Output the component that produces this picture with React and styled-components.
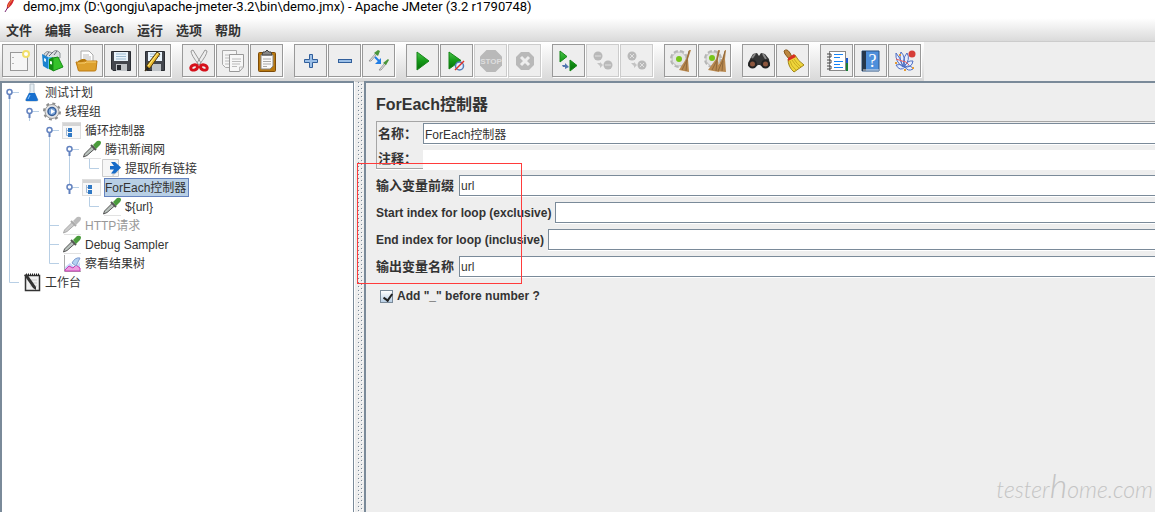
import { useState } from "react";
import styled, { createGlobalStyle } from "styled-components";

const GlobalStyle = createGlobalStyle`
  html, body, #root {
    height: 100%;
    margin: 0;
  }
  body {
    overflow: hidden;
    background: #eeeeee;
    color: #333333;
    font-family: "Liberation Sans", "Noto Sans CJK SC", sans-serif;
    font-size: 12px;
  }
  * {
    box-sizing: border-box;
  }
`;

const Window = styled.div`
  display: flex;
  flex-direction: column;
  height: 100%;
`;

const TitleBar = styled.header`
  display: flex;
  align-items: flex-start;
  gap: 8px;
  height: 18px;
  padding-left: 3px;
  background: #ffffff;
  color: #000000;
  font: 13px/14px Roboto, "Open Sans", sans-serif;
  white-space: nowrap;
`;

const MenuBar = styled.nav`
  display: flex;
  align-items: center;
  gap: 13px;
  height: 24px;
  padding: 0 6px 1px;
  background: linear-gradient(#ffffff, #dadada);
  border-bottom: 1px solid #cccccc;
`;

const MenuButton = styled.button`
  padding: 0;
  border: 0;
  background: none;
  color: #333333;
  font: bold ${(props) => (props.$latin ? 12 : 13)}px "Liberation Sans",
    "Noto Sans CJK SC", sans-serif;
`;

const ToolBar = styled.div`
  display: flex;
  align-items: center;
  align-self: flex-start;
  gap: 10px;
  height: 39px;
  padding: 0 2px 1px;
  background: linear-gradient(#ffffff, #d8d8d8);
`;

const ToolGroup = styled.div`
  display: flex;
`;

const ToolButton = styled.button`
  display: flex;
  align-items: center;
  justify-content: center;
  width: 33px;
  height: 33px;
  margin: 0 1px 1px 0;
  padding: 0;
  border: 1px solid ${(props) => (props.disabled ? "#cccccc" : "#999999")};
  box-shadow: 1px 1px 0 #ffffff;
  background: #eeeeee;
`;

const Workspace = styled.main`
  display: flex;
  flex: 1;
  min-height: 0;
`;

const TreePanel = styled.section`
  flex: 0 0 354px;
  border: solid #7a8a99;
  border-width: 2px 1px 0 2px;
  background: #ffffff;
`;

const TreeList = styled.ul`
  margin: 0;
  padding: 0;
  list-style: none;
`;

const TreeRow = styled.li`
  display: flex;
  align-items: center;
  height: 19px;
  color: ${(props) => (props.$disabled ? "#999999" : "#333333")};
  svg {
    flex: none;
  }
`;

const NodeLabel = styled.span`
  height: 19px;
  margin-left: 2px;
  padding-right: 2px;
  border: 1px solid ${(props) => (props.$selected ? "#6382bf" : "transparent")};
  background: ${(props) => (props.$selected ? "#b8cfe5" : "transparent")};
  line-height: 18px;
  white-space: nowrap;
`;

const Divider = styled.div`
  flex: 0 0 10px;
  border-top: 1px solid #cccccc;
  border-left: 1px solid #ffffff;
  background: #eeeeee;
`;

const Dots = styled.svg`
  display: block;
  width: 8px;
  height: 100%;
`;

const EditorPanel = styled.section`
  position: relative;
  flex: 1;
  min-width: 0;
  padding: 10px 0 0 10px;
  border: solid #7a8a99;
  border-width: 2px 0 0 2px;
  background: #eeeeee;
`;

const Heading = styled.h1`
  height: 28px;
  margin: 0;
  font-size: 16px;
  line-height: 24px;
`;

const NameBox = styled.div`
  display: flex;
  flex-direction: column;
  gap: 6px;
  margin-bottom: 6px;
  padding: 1px 0 0 1px;
  border: solid #a5a5a5;
  border-width: 1px 0 1px 1px;
  box-shadow: 0 1px 0 #ffffff;
`;

const Fields = styled.div`
  display: flex;
  flex-direction: column;
  gap: 6px;
`;

const FieldRow = styled.div`
  display: flex;
  align-items: center;
  gap: ${(props) => (props.$latin ? 4 : 5)}px;
`;

const Label = styled.label`
  flex: none;
  min-width: ${(props) => (props.$short ? 40 : 0)}px;
  font-size: ${(props) => (props.$latin ? 12 : 13)}px;
  font-weight: bold;
  line-height: 18px;
  white-space: nowrap;
`;

const TextInput = styled.input`
  flex: 1;
  min-width: 0;
  height: ${(props) => (props.$plain ? 18 : 21)}px;
  padding: 0 1px;
  border: solid #7a8a99;
  border-width: ${(props) => (props.$plain ? "0" : "1px 0 1px 1px")};
  border-radius: 0;
  box-shadow: 0 1px 0 #ffffff;
  background: #ffffff;
  color: #333333;
  font: 12px "Liberation Sans", "Noto Sans CJK SC", sans-serif;
  outline: none;
`;

const CheckRow = styled.div`
  display: flex;
  align-items: center;
  gap: 4px;
  padding: 10px 0 0 4px;
`;

const CheckBox = styled.input`
  appearance: none;
  width: 13px;
  height: 13px;
  margin: 0;
  border: 1px solid #7a8a99;
  background: linear-gradient(#ffffff, #b8cfe5);
  &:checked::after {
    content: "";
    display: block;
    width: 4px;
    height: 7px;
    margin: 1px 0 0 4px;
    border: solid #222222;
    border-width: 0 2px 2px 0;
    transform: rotate(35deg);
  }
`;

const Highlight = styled.div`
  position: absolute;
  top: 80px;
  left: -9px;
  width: 165px;
  height: 121px;
  border: 1px solid #ff3b3b;
  pointer-events: none;
`;

const Watermark = styled.div`
  position: absolute;
  right: 2px;
  bottom: 8px;
  color: #c4c4c4;
  font: italic 300 23px/30px Lato, sans-serif;
`;

const TallLetter = styled.span`
  font-size: 34px;
  line-height: 30px;
`;

const toolIcons = {
  new: (
    <>
      <rect x="3.500" y="3.500" width="17" height="18" fill="#f6f6f6" stroke="#999" />
      <path d="M6 14v1M6 8v1" stroke="#777" />
      <circle cx="19" cy="5" r="3" fill="#fff" stroke="#f1df69" strokeWidth="2" />
    </>
  ),
  templates: (
    <>
      <path d="M3 5q3-4 6-2l2 1q4-5 8 0v5H3z" fill="#d9dfe1" stroke="#8c9498" />
      <path d="M5 7l3-4M8 7l4-4M13 6l3-4" stroke="#667" />
      <path d="M1 5l6 3v12l-5-3z" fill="#1b83d0" />
      <path d="M7 8h4v11l-4 1z" fill="#53b8ef" />
      <path d="M3 9l2 1v3l-2-1z" fill="#dff3ff" />
      <path d="M8 10l4-2v14l-4-2z" fill="#138a13" />
      <path d="M12 9l5-1 5 10-10 4z" fill="#35c229" stroke="#168b16" />
      <path d="M9 12l2 .5v3l-2-.5z" fill="#efffef" />
    </>
  ),
  open: (
    <>
      <path d="M6 12V2h8l4 4v7z" fill="#fff" stroke="#aaa" />
      <path d="M8 6h6M8 8h8M8 10h8" stroke="#bbb" />
      <path d="M3 12l4-2h3l2 2h8v9H3z" fill="#b67a0b" />
      <path d="M1 13q5 1 8-1h13l-1 9q0 1-2 1H4q-1 0-1-2z" fill="#dda02c" stroke="#bd7b12" />
      <path d="M3 14h7l1-1h10" stroke="#f8cf70" fill="none" />
    </>
  ),
  save: (
    <>
      <path d="M2.500 2.500h19v19H4l-1.500-1.500z" fill="#43464d" stroke="#292c32" />
      <path d="M5 3h14v9H5z" fill="#e9f3fb" />
      <path d="M7 5h10M7 7.500h10M7 10h10" stroke="#9dbbd1" />
      <path d="M7 15h11v7H7z" fill="#bfc3c7" />
      <path d="M8 16h4v5H8z" fill="#25282e" />
    </>
  ),
  saveAs: (
    <>
      <path d="M2.500 2.500h19v19H4l-1.500-1.500z" fill="#43464d" stroke="#292c32" />
      <path d="M5 3h14v9H5z" fill="#e9f3fb" />
      <path d="M7 5h10M7 7.500h10" stroke="#9dbbd1" />
      <path d="M9 15h9v7H9z" fill="#bfc3c7" />
      <path d="M2 22l2-6L14 3l3 2L7 19z" fill="#e9b82e" stroke="#543a0c" />
      <path d="M5 17L15 4" stroke="#fff086" />
      <path d="M2 22l2-5 3 3z" fill="#222" />
    </>
  ),
  cut: (
    <>
      <path d="M4 2q0 4 8 14l2-2L6 1zM20 2q0 4-8 14l-2-2L18 1z" fill="#eee" stroke="#999" />
      <ellipse cx="7" cy="18.500" rx="3.500" ry="2.500" fill="none" stroke="#d5101a" strokeWidth="3" transform="rotate(-20 7 18)" />
      <ellipse cx="17" cy="18.500" rx="3.500" ry="2.500" fill="none" stroke="#d5101a" strokeWidth="3" transform="rotate(20 17 18)" />
    </>
  ),
  copy: (
    <>
      <path d="M1.500 1.500h14v17h-11l-3-3z" fill="#f5f5f5" stroke="#aaa" />
      <path d="M4 6h9M4 9h5M4 12h4M4 15h4" stroke="#bbb" />
      <path d="M8.500 5.500h14V18l-4 4.500h-10z" fill="#f7f7f7" stroke="#999" />
      <path d="M11 10h9M11 12.500h9M11 15h8M11 17.500h5M18.500 22v-4h4" stroke="#bbb" fill="none" />
    </>
  ),
  paste: (
    <>
      <rect x="3.500" y="3.500" width="17" height="19" rx="1" fill="#b87910" stroke="#7d4b08" />
      <path d="M6 6h12v11l-3 3H6z" fill="#fafafa" stroke="#888" />
      <path d="M8 10h8M8 12.500h8M8 15h8M8 17.500h4" stroke="#aaa" />
      <path d="M7 6l1-3h2l2-2 2 2h2l1 3z" fill="#888" stroke="#444" />
    </>
  ),
  plus: <path d="M10.500 5.500h3v5h5v3h-5v5h-3v-5h-5v-3h5z" fill="#9bbfe7" stroke="#315f9b" />,
  minus: <rect x="5.500" y="10.500" width="13" height="3" fill="#9bbfe7" stroke="#315f9b" />,
  toggle: (
    <>
      <path d="M2 12l7-8 1 1-6 7z" fill="#eee" stroke="#999" />
      <path d="M7 4l4-3 2 1-2 5z" fill="#4b963b" />
      <path d="M12 21l6-7 1 1-5 6z" fill="#eee" stroke="#999" />
      <path d="M16 14l5-4 1 1-3 5z" fill="#4b963b" />
      <path d="M8 8l5 5" stroke="#207de5" strokeWidth="2" />
      <path d="M14 9v6H8z" fill="#207de5" />
    </>
  ),
  start: <path d="M6 3l12 9-12 9z" fill="url(#play)" stroke="#178619" />,
  startNoTimers: (
    <>
      <path d="M4 3l12 8.500L4 20z" fill="url(#play)" stroke="#178619" />
      <circle cx="14.500" cy="17" r="4" fill="#e5efff" stroke="#547db8" strokeWidth="1.500" />
      <path d="M10 21l9-9" stroke="#e23027" strokeWidth="1.500" />
    </>
  ),
  stop: (
    <>
      <path d="M7.500 1h9L23 7.500v9L16.500 23h-9L1 16.500v-9z" fill="#b9b9b9" />
      <text x="12" y="15" textAnchor="middle" fontSize="8" fontWeight="bold" fill="#dedede">
        STOP
      </text>
    </>
  ),
  shutdown: (
    <>
      <path d="M8 3h8l5 5v8l-5 5H8l-5-5V8z" fill="#b9b9b9" />
      <path d="M8 8l8 8M16 8l-8 8" stroke="#eee" strokeWidth="3" />
    </>
  ),
  remoteStart: (
    <>
      <path d="M3 2l7 5.500L3 13zM13 11l7 5.500-7 5.500z" fill="url(#play)" stroke="#178619" />
      <path d="M5 16h3v-2l4 4-4 2v-2H6z" fill="#5277ae" />
    </>
  ),
  remoteStop: (
    <>
      <circle cx="7" cy="7" r="4.500" fill="#b9b9b9" />
      <circle cx="17" cy="16" r="4.500" fill="#b9b9b9" />
      <path d="M4 7h6M14 16h6" stroke="#ccc" strokeWidth="2" />
      <path d="M6 14h3v-1l3 3-3 3v-2z" fill="#c4c4c4" />
    </>
  ),
  remoteShutdown: (
    <>
      <circle cx="7" cy="7" r="4.500" fill="#b9b9b9" />
      <circle cx="17" cy="16" r="4.500" fill="#b9b9b9" />
      <path d="M5 5l4 4M9 5L5 9M15 14l4 4M19 14l-4 4" stroke="#e0e0e0" />
      <path d="M6 14h3v-1l3 3-3 3v-2z" fill="#c4c4c4" />
    </>
  ),
  clear: (
    <>
      <circle cx="10" cy="10" r="7.500" stroke="#b5b5b5" strokeWidth="3" strokeDasharray="4 2" />
      <circle cx="10" cy="10" r="7" fill="#e4e4e4" stroke="#c0c0c0" />
      <circle cx="10" cy="10" r="3" fill="#77c51b" />
      <path d="M20 1h2l-3 9 1 13-10-2 7-11z" fill="#b98950" />
      <path d="M20 2l-2 9-5 10M18 11l-1 11" stroke="#8f683b" fill="none" />
    </>
  ),
  clearAll: (
    <>
      <circle cx="10" cy="10" r="7.500" stroke="#b5b5b5" strokeWidth="3" strokeDasharray="4 2" />
      <circle cx="10" cy="10" r="7" fill="#e4e4e4" stroke="#c0c0c0" />
      <circle cx="9" cy="9" r="3" fill="#77c51b" />
      <path d="M15 1h2l-2 9 1 13-11-2 8-11zM22 1h1l-1 9 1 13-11-1 7-12z" fill="#b98950" />
      <path d="M16 2l-2 9-5 10M14 12l-1 10M22 2l-2 9-5 11M20 12l-1 10" stroke="#8f683b" fill="none" />
    </>
  ),
  search: (
    <>
      <path d="M3 10l3-5 4-1 2 3 2-3 4 1 4 5 1 7-6 2-4-3h-2l-4 3-6-2z" fill="#353535" />
      <path d="M5 9l3-4M16 5l3 5" stroke="#888" strokeWidth="2" />
      <circle cx="5.500" cy="15" r="3.500" fill="#8d563d" stroke="#222" strokeWidth="2" />
      <circle cx="18.500" cy="15" r="3.500" fill="#8d563d" stroke="#222" strokeWidth="2" />
    </>
  ),
  reset: (
    <>
      <path d="M3 2q3-3 6 2l2 4-3 2-4-5z" fill="#bd8740" stroke="#875718" />
      <path d="M7 10l7-4q3 6 9 10l-10 7Q7 18 7 10z" fill="#eed53b" stroke="#a18516" />
      <path d="M7 9l6-4 2 3-8 4z" fill="#d63022" />
      <path d="M9 12q1 5 6 9M11 11q3 5 7 8M13 10q3 5 7 8" stroke="#c9ab20" fill="none" />
    </>
  ),
  functions: (
    <>
      <path d="M18 10h5v12h-5z" fill="#187f36" />
      <path d="M20 9h3v5h-3z" fill="#1756ce" />
      <rect x="4.500" y="2.500" width="16" height="19" fill="#fff" stroke="#888" />
      <path d="M9 5.500h9M9 8.500h6M9 12.500h9M9 15.500h6M9 18.500h9" stroke="#1784f4" />
      <path d="M2 5h4v3H2M2 11h4v3H2M2 17h4v3H2" fill="none" stroke="#444" />
    </>
  ),
  help: (
    <>
      <path d="M3 2h17v20H3z" fill="#4e8fdb" stroke="#285385" />
      <path d="M3 2h4v20H3z" fill="#26384d" />
      <path d="M4 21h16" stroke="#e0e0e0" />
      <text x="13.500" y="18" textAnchor="middle" fontSize="18" fontFamily="Liberation Serif, serif" fill="#fff">
        ?
      </text>
    </>
  ),
  ssl: (
    <>
      <path d="M3 4q5 5 7 14Q2 13 3 4zM8 3q5 5 3 15Q5 11 8 3zM14 4q4 6-3 14-2-8 3-14zM20 12q-6-1-9 6 8 1 9-6zM3 16q4-2 9 2-5 5-9-2zM12 18q6-3 8 2-5 3-8-2z" fill="#e6edff" stroke="#506fc2" />
      <path d="M3 10l6 2 4 1 3 3" stroke="#e66262" />
      <path d="M7 5v2M3 13v2M12 20v2M19 19h2" stroke="#e49b36" strokeWidth="2" />
      <circle cx="19" cy="5" r="3.500" fill="#d63e39" />
    </>
  ),
};

const toolGroups = [
  [["new", "New"], ["templates", "Templates"], ["open", "Open"], ["save", "Save"], ["saveAs", "Save as"]],
  [["cut", "Cut"], ["copy", "Copy"], ["paste", "Paste"]],
  [["plus", "Expand all"], ["minus", "Collapse all"], ["toggle", "Toggle"]],
  [["start", "Start"], ["startNoTimers", "Start no pauses"], ["stop", "Stop", true], ["shutdown", "Shutdown", true]],
  [["remoteStart", "Remote start all"], ["remoteStop", "Remote stop all", true], ["remoteShutdown", "Remote shutdown all", true]],
  [["clear", "Clear"], ["clearAll", "Clear all"]],
  [["search", "Search"], ["reset", "Reset search"]],
  [["functions", "Function helper"], ["help", "Help"], ["ssl", "Options"]],
];

const Dropper = ({ tip = "#4a9b3c", body = "#555", fill = "#b9c2bd" }) => (
  <>
    <path d="M2 18.500h17" stroke="#e2e2e2" />
    <path d="M1.500 17l1-3 8-8 2.500 2.500-8 7z" fill={fill} stroke={body} />
    <path d="M9 5l5 5" stroke={body} strokeWidth="2" />
    <path d="M11 5l4-4q3-1 4 1 0 2-1 3l-4 4z" fill={tip} />
  </>
);

const nodeIcons = {
  plan: (
    <>
      <path d="M8 1h4v8l4 8q0 1-2 1H5q-2 0-1-2l4-7z" fill="#e4edf3" stroke="#b3bfc8" />
      <path d="M7 10h6l3 7q0 1-2 1H5q-2 0-1-2z" fill="#1870cf" />
      <path d="M8 12l-2 4" stroke="#8ec8ff" />
    </>
  ),
  threads: (
    <>
      <circle cx="10" cy="9.500" r="8" stroke="#8b8b8b" strokeWidth="2" strokeDasharray="3 3.300" />
      <circle cx="10" cy="9.500" r="7" fill="#e4e4e4" stroke="#999" />
      <circle cx="10" cy="9.500" r="4" fill="#7da7dc" stroke="#365d96" strokeWidth="1.500" />
      <path d="M9 7l4 2.500-4 2.500z" fill="#fff" />
    </>
  ),
  controller: (
    <>
      <rect x=".500" y="1.500" width="18" height="16" fill="#f8f8f8" stroke="#dedede" />
      <path d="M1 3.500h18" stroke="#d4d4d4" strokeWidth="3" />
      <path d="M4.500 7v7.500H7M4 9.500h3" stroke="#9bb6d4" />
      <path d="M6 7h4v4H6zM6 12h4v4H6z" fill="#2f78c4" />
    </>
  ),
  sampler: <Dropper />,
  samplerOff: <Dropper tip="#bbb" body="#aaa" fill="#ccc" />,
  extractor: (
    <>
      <path d="M.500.500h16v17H.500z" fill="#f6f6f6" stroke="#ccc" />
      <path d="M11 17v-4h5" fill="#ddd" stroke="#ccc" />
      <path d="M8 7h4L9 3h4l6 5.500-6 6H9l3-4H8z" fill="#176bc8" />
    </>
  ),
  results: (
    <>
      <path d="M2.500 1v16.500H19" stroke="#aaa" />
      <path d="M3 13l5-4 5 4 5-5v9H3z" fill="#c7d8fa" />
      <path d="M3 16l4-4 4 2 3-3 4 3v3H3z" fill="#ec9ddf" stroke="#c83bb4" />
      <path d="M10 9q3-6 8-5l-4 8z" fill="#b3d0f2" stroke="#7f9bcd" />
    </>
  ),
  workbench: (
    <>
      <rect x="3.500" y="2.500" width="14" height="15" fill="#f1f1f1" stroke="#333" strokeWidth="1.500" />
      <path d="M4 1.500h14" stroke="#222" strokeWidth="2" strokeDasharray="1 1" />
      <path d="M8 7h7M8 10h7M8 13h7" stroke="#ccc" />
      <path d="M2 2l3-1 9 13v3l-3-2z" fill="#333" />
    </>
  ),
};

const treeRows = [
  { guides: ["handle"], icon: "plan", label: "测试计划" },
  { guides: ["line", "handle"], icon: "threads", label: "线程组" },
  { guides: ["line", "", "handle"], icon: "controller", label: "循环控制器" },
  { guides: ["line", "", "line", "handle"], icon: "sampler", label: "腾讯新闻网" },
  { guides: ["line", "", "line", "line", "elbow"], icon: "extractor", label: "提取所有链接" },
  { guides: ["line", "", "line", "lastHandle"], icon: "controller", label: "ForEach控制器", selected: true },
  { guides: ["line", "", "line", "", "elbow"], icon: "sampler", label: "${url}" },
  { guides: ["line", "", "tee"], icon: "samplerOff", label: "HTTP请求", disabled: true },
  { guides: ["line", "", "tee"], icon: "sampler", label: "Debug Sampler" },
  { guides: ["line", "", "elbow"], icon: "results", label: "察看结果树" },
  { guides: ["elbow"], icon: "workbench", label: "工作台" },
];

const guidePaths = {
  line: "M7.500 0v19",
  tee: "M7.500 0v19M7.500 9.500H17",
  elbow: "M7.500 0v9.500H17",
  handle: "M7.500 15v4M10 9.500h7",
  lastHandle: "M7.500 0v6M10 9.500h7",
};

const Guide = ({ type }) => (
  <svg width="20" height="19" aria-hidden="true">
    <path d={guidePaths[type] || ""} stroke="#b8cfe5" fill="none" />
    {/handle/i.test(type) && (
      <>
        <path d="M7.500 11v5" stroke="#6382bf" strokeWidth="2" />
        <circle cx="7.500" cy="9" r="2.500" fill="#fff" stroke="#6382bf" strokeWidth="1.500" />
      </>
    )}
  </svg>
);

const menus = ["文件", "编辑", "Search", "运行", "选项", "帮助"];

const loopFields = [
  { id: "inputVar", label: "输入变量前缀", value: "url" },
  { id: "startIndex", label: "Start index for loop (exclusive)", value: "", latin: true },
  { id: "endIndex", label: "End index for loop (inclusive)", value: "", latin: true },
  { id: "outputVar", label: "输出变量名称", value: "url" },
];

const App = () => {
  const [useSeparator, setUseSeparator] = useState(true);

  return (
    <Window>
      <GlobalStyle />
      <TitleBar>
        <svg width="12" height="13" aria-hidden="true">
          <defs>
            <linearGradient id="play" x1="0" y1="0" x2="0" y2="1">
              <stop offset="0" stopColor="#4ac54c" />
              <stop offset=".5" stopColor="#159a18" />
              <stop offset="1" stopColor="#056d09" />
            </linearGradient>
          </defs>
          <path d="M4 9Q3 3 9-1l2 1Q9 6 4 9z" fill="#d3262f" />
          <path d="M5 7q1-4 4-7" stroke="#f08a3b" fill="none" />
          <path d="M2 12l3-5" stroke="#7b2772" />
        </svg>
        <span>demo.jmx (D:\gongju\apache-jmeter-3.2\bin\demo.jmx) - Apache JMeter (3.2 r1790748)</span>
      </TitleBar>
      <MenuBar>
        {menus.map((menu) => (
          <MenuButton key={menu} type="button" $latin={menu === "Search"}>
            {menu}
          </MenuButton>
        ))}
      </MenuBar>
      <ToolBar role="toolbar">
        {toolGroups.map((group) => (
          <ToolGroup key={group[0][0]}>
            {group.map(([icon, title, disabled]) => (
              <ToolButton key={icon} type="button" aria-label={title} disabled={disabled}>
                <svg width="24" height="24" viewBox="0 0 24 24" fill="none" aria-hidden="true">
                  {toolIcons[icon]}
                </svg>
              </ToolButton>
            ))}
          </ToolGroup>
        ))}
      </ToolBar>
      <Workspace>
        <TreePanel>
          <TreeList>
            {treeRows.map((row) => (
              <TreeRow key={row.label} $disabled={row.disabled}>
                {row.guides.map((type, index) => (
                  <Guide key={index} type={type} />
                ))}
                <svg width="20" height="19" fill="none" aria-hidden="true">
                  {nodeIcons[row.icon]}
                </svg>
                <NodeLabel $selected={row.selected}>{row.label}</NodeLabel>
              </TreeRow>
            ))}
          </TreeList>
        </TreePanel>
        <Divider>
          <Dots aria-hidden="true">
            <defs>
              <pattern id="grip" width="8" height="4" patternUnits="userSpaceOnUse">
                <rect width="8" height="4" fill="#eeeeee" />
                <path d="M3 0h1v1H3zM6 2h1v1H6z" fill="#7a8a99" />
                <path d="M4 1h1v1H4zM7 3h1v1H7z" fill="#ffffff" />
              </pattern>
            </defs>
            <rect width="8" height="100%" fill="url(#grip)" />
          </Dots>
        </Divider>
        <EditorPanel>
          <Heading>ForEach控制器</Heading>
          <NameBox>
            <FieldRow>
              <Label htmlFor="name" $short>名称：</Label>
              <TextInput id="name" defaultValue="ForEach控制器" />
            </FieldRow>
            <FieldRow>
              <Label htmlFor="comments" $short>注释：</Label>
              <TextInput id="comments" $plain />
            </FieldRow>
          </NameBox>
          <Fields>
            {loopFields.map(({ id, label, value, latin }) => (
              <FieldRow key={id} $latin={latin}>
                <Label htmlFor={id} $latin={latin}>{label}</Label>
                <TextInput id={id} defaultValue={value} />
              </FieldRow>
            ))}
          </Fields>
          <CheckRow>
            <CheckBox
              id="separator"
              type="checkbox"
              checked={useSeparator}
              onChange={(event) => setUseSeparator(event.target.checked)}
            />
            <Label htmlFor="separator" $latin>Add "_" before number ?</Label>
          </CheckRow>
          <Highlight />
          <Watermark>
            tester<TallLetter>h</TallLetter>ome.com
          </Watermark>
        </EditorPanel>
      </Workspace>
    </Window>
  );
};

export default App;
